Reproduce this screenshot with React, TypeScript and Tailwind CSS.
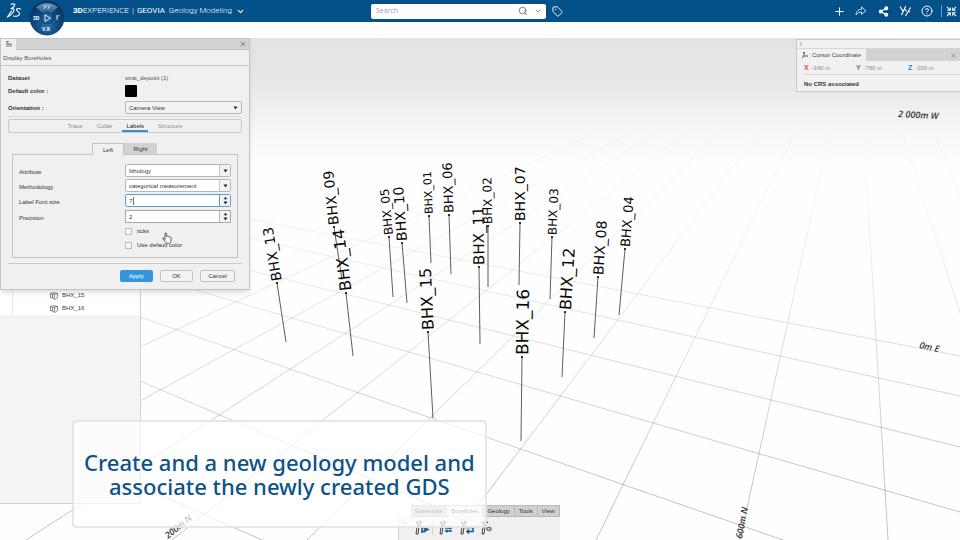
import React, { useState } from 'react';
import { ChevronDown, ChevronRight, CircleHelp, Plus, Search, Share2, Tag, X } from 'lucide-react';

interface Borehole {
  name: string;
  collar: [number, number];
  toe: [number, number];
  top: [number, number];
  size: number;
}

type Line = [number, number, number, number];

const boreholes: Borehole[] = [
  { name: 'BHX_01', collar: [429, 216], toe: [431, 263], top: [427, 172], size: 11 },
  { name: 'BHX_02', collar: [488, 226], toe: [488, 287], top: [487, 179], size: 12 },
  { name: 'BHX_03', collar: [552, 237], toe: [550, 299], top: [554, 188], size: 12 },
  { name: 'BHX_04', collar: [625, 249], toe: [619, 315], top: [629, 197], size: 13 },
  { name: 'BHX_05', collar: [389, 237], toe: [393, 297], top: [384, 187], size: 12 },
  { name: 'BHX_06', collar: [449, 215], toe: [451, 274], top: [447, 161], size: 13 },
  { name: 'BHX_07', collar: [520, 223], toe: [519, 285], top: [520, 165], size: 14 },
  { name: 'BHX_08', collar: [598, 277], toe: [594, 338], top: [602, 219], size: 14 },
  { name: 'BHX_09', collar: [334, 227], toe: [342, 280], top: [328, 170], size: 14 },
  { name: 'BHX_10', collar: [402, 243], toe: [407, 303], top: [398, 184], size: 14 },
  { name: 'BHX_11', collar: [479, 267], toe: [480, 344], top: [478, 206], size: 15 },
  { name: 'BHX_12', collar: [565, 312], toe: [562, 377], top: [569, 248], size: 16 },
  { name: 'BHX_13', collar: [277, 283], toe: [286, 342], top: [267, 224], size: 14 },
  { name: 'BHX_14', collar: [346, 293], toe: [353, 356], top: [338, 228], size: 16 },
  { name: 'BHX_15', collar: [428, 332], toe: [433, 418], top: [425, 265], size: 16 },
  { name: 'BHX_16', collar: [522, 357], toe: [521, 441], top: [523, 285], size: 17 },
];

const eastings: Line[] = [
  [140, 198, 960, 356],
  [140, 214, 960, 396],
  [140, 243, 960, 447],
  [140, 274, 960, 512],
  [140, 317, 783, 540],
  [140, 381, 515, 540],
  [140, 486, 262, 540],
];

const northings: Line[] = [
  [935, 135, 960, 196],
  [903, 135, 960, 313],
  [864, 135, 888, 540],
  [829, 135, 740, 540],
  [794, 135, 596, 540],
  [757, 135, 452, 540],
  [716, 135, 307, 540],
  [682, 135, 172, 540],
  [652, 135, 26, 540],
  [626, 135, 140, 401],
  [590, 135, 140, 347],
];

const gridLabels = [
  { text: '2 000m W', x: 898, y: 117, angle: 3 },
  { text: '0m E', x: 919, y: 348, angle: 12 },
  { text: '600m N', x: 742, y: 539, angle: -79 },
  { text: '200m N', x: 168, y: 539, angle: -39 },
];

const Scene: React.FC = () => (
  <svg className="block w-full h-full" viewBox="0 38 960 502" preserveAspectRatio="xMinYMin slice" aria-hidden="true">
    <defs>
      <linearGradient id="sky" x1="0" y1="38" x2="0" y2="165" gradientUnits="userSpaceOnUse">
        <stop offset="0" stopColor="#e3e3e3" />
        <stop offset="0.4" stopColor="#e9e9e9" />
        <stop offset="0.7" stopColor="#f6f6f6" />
        <stop offset="1" stopColor="#fefefe" />
      </linearGradient>
      <linearGradient id="fade" x1="0" y1="130" x2="0" y2="500" gradientUnits="userSpaceOnUse">
        <stop offset="0" stopColor="#777" stopOpacity="0.04" />
        <stop offset="0.3" stopColor="#777" stopOpacity="0.13" />
        <stop offset="0.6" stopColor="#777" stopOpacity="0.32" />
        <stop offset="1" stopColor="#777" stopOpacity="0.55" />
      </linearGradient>
    </defs>
    <rect x="0" y="38" width="960" height="502" fill="#fefefe" />
    <rect x="0" y="38" width="960" height="127" fill="url(#sky)" />
    <g stroke="url(#fade)" strokeWidth="0.8">
      {[...eastings, ...northings].map(([x1, y1, x2, y2]) => (
        <line key={`${x1}-${y1}-${x2}`} x1={x1} y1={y1} x2={x2} y2={y2} />
      ))}
    </g>
    <g fontFamily="'Open Sans', 'Noto Sans', sans-serif" fontSize="9" fontStyle="italic" fontWeight="600" fill="#333">
      {gridLabels.map((l) => (
        <text key={l.text} transform={`translate(${l.x} ${l.y}) rotate(${l.angle})`}>{l.text}</text>
      ))}
    </g>
    <g fontFamily="'DejaVu Sans', sans-serif" fill="#0a0a0a">
      {boreholes.map(({ name, collar, toe, top, size }) => {
        const angle = (Math.atan2(top[1] - collar[1], top[0] - collar[0]) * 180) / Math.PI;
        return (
          <g key={name}>
            <line x1={collar[0]} y1={collar[1]} x2={toe[0]} y2={toe[1]} stroke="#333" strokeWidth="0.8" />
            <circle cx={collar[0]} cy={collar[1]} r="1.1" />
            <text transform={`translate(${collar[0]} ${collar[1]}) rotate(${angle})`} x="2" y={size * 0.36} fontSize={size}>
              {name}
            </text>
          </g>
        );
      })}
    </g>
  </svg>
);

const Logo: React.FC = () => (
  <svg className="w-4 h-4" viewBox="0 0 16 16" fill="none" stroke="#fff" strokeWidth="1.1" strokeLinecap="round" strokeLinejoin="round" aria-hidden="true">
    <path d="M5 1.200c2.600-.8 4.300-.2 3.700 1C8.200 3.400 6.800 4.700 5 5.700c1.800-.2 2.800.2 3 1 .3 1.800-2.400 5.200-6.600 7.400 1.500-2.300 2.700-4.200 4-6" />
    <path d="M14.500 6c-1.900-.9-4-.5-4 .7 0 1.300 3.300 2.300 3 4.100-.3 1.900-3.200 3-6 2.200" />
  </svg>
);

const Compass: React.FC = () => (
  <svg className="w-9 h-9" viewBox="0 0 36 36" aria-hidden="true">
    <defs>
      <radialGradient id="ball" cx="0.5" cy="0.7" r="0.7">
        <stop offset="0" stopColor="#2672ad" />
        <stop offset="0.5" stopColor="#0e4a80" />
        <stop offset="1" stopColor="#062f58" />
      </radialGradient>
      <linearGradient id="shine" x1="0" y1="0" x2="0" y2="1">
        <stop offset="0" stopColor="#7fa9c7" />
        <stop offset="1" stopColor="#2c6797" />
      </linearGradient>
    </defs>
    <circle cx="18" cy="18" r="17" fill="url(#ball)" stroke="#0a3c69" strokeWidth="0.8" />
    <path d="M7 7.500a15.500 15.500 0 0 1 22 0l-6.500 6a7 7 0 0 0-9 0z" fill="url(#shine)" opacity="0.8" />
    <circle cx="18" cy="18" r="6" fill="#1b5c93" stroke="#0a3c69" strokeWidth="0.8" />
    <path d="M8 28l5.500-5.500M28 28l-5.500-5.500M8 8l5.500 5.500M28 8l-5.500 5.500" stroke="#0a3761" strokeWidth="0.7" />
    <path d="M16 14.800l5.500 3.300-5.500 3.400z" fill="none" stroke="#fff" strokeWidth="0.9" />
    <path d="M14.500 5l2 2.500M17 5l-2 4M18 5.500l1.800 2M21 5l-2.200 4.200" fill="none" stroke="#dceaf4" strokeWidth="0.8" />
    <path d="M28 20v-5M28 17.500c.4-1.400 1.200-2 2.500-2" fill="none" stroke="#dceaf4" strokeWidth="0.9" />
    <g fill="#fff" fontFamily="'Open Sans', sans-serif" fontSize="5" fontWeight="700">
      <text x="4" y="20">3D</text>
      <text x="13" y="31">V.R</text>
    </g>
  </svg>
);

const headerButton = 'flex items-center justify-center w-4 h-4 text-white';

const Header: React.FC = () => (
  <header className="relative z-20 flex items-center h-[22px] bg-[#045088] text-white font-['Open_Sans',sans-serif]">
    <div className="flex items-center shrink-0 basis-[371px]">
      <a href="#home" aria-label="Home" className="ml-1.5"><Logo /></a>
      <button aria-label="Compass" className="ml-[7px] h-[22px] overflow-visible self-start"><Compass /></button>
      <h1 className="ml-2 flex items-center text-[8px] whitespace-nowrap font-['Roboto',sans-serif]">
        <span className="font-bold">3D</span>
        <span className="font-light">EXPERIENCE</span>
        <span className="mx-[3px] text-[#b7cfe0]">|</span>
        <span>GEOVIA</span>
        <span className="ml-1 font-light">Geology Modeling</span>
      </h1>
      <button aria-label="Switch app" className="ml-1"><ChevronDown size={9} strokeWidth={3} /></button>
    </div>
    <form className="flex items-center w-[175px] h-[15px] bg-white rounded-xs pr-1" onSubmit={(e) => e.preventDefault()}>
      <input aria-label="Search" placeholder="Search" className="flex-1 min-w-0 px-[5px] text-[7px] text-gray-700 placeholder:text-gray-400 outline-none" />
      <button aria-label="Run search" className="text-gray-600"><Search size={10} strokeWidth={1.8} /></button>
      <button aria-label="Search options" className="ml-1.5 text-gray-500"><ChevronDown size={8} strokeWidth={2.5} /></button>
    </form>
    <button aria-label="Tags" className="ml-1.5"><Tag size={11} strokeWidth={2} /></button>
    <nav className="flex items-center justify-end flex-1 gap-1.5 pr-[3px]">
      <button aria-label="Add" className={headerButton}><Plus size={13} strokeWidth={2} /></button>
      <button aria-label="Share" className={headerButton}>
        <svg className="w-3 h-3" viewBox="0 0 12 12" fill="none" stroke="#cfe0ec" strokeWidth="1"><path d="M1 10c.3-4 2.500-5.600 5.500-5.600V2L11 5.800 6.500 9.300V7C4.500 7 2.500 7.800 1 10z" /></svg>
      </button>
      <button aria-label="Collaborate" className={headerButton}><Share2 size={11} strokeWidth={2.6} fill="#fff" /></button>
      <button aria-label="Communities" className={headerButton}>
        <svg className="w-3 h-3" viewBox="0 0 12 12" fill="none" stroke="#fff" strokeWidth="1.100"><path d="M1 1.500l2.800 4.500M6.800 1L2.500 10M5.500 3.500l2 3M11.500 2.500L6.500 11M8.800 6.500l2.400.3" /></svg>
      </button>
      <button aria-label="Help" className={headerButton}><CircleHelp size={12} strokeWidth={2} /></button>
      <span className="flex items-center border-l border-[#6d9cc0] h-3 pl-1">
        <button aria-label="Exit full screen">
          <svg className="w-[11px] h-[11px]" viewBox="0 0 12 12" fill="none" stroke="#fff" strokeWidth="1.100"><path d="M1 1l3.500 3.500M1.500 4.700h3.200V1.500M11 1L7.500 4.500M7.300 1.500v3.200h3.200M1 11l3.500-3.500M1.500 7.300h3.200v3.200M11 11L7.500 7.500M10.500 7.300H7.300v3.200" /></svg>
        </button>
      </span>
    </nav>
  </header>
);

const Caret: React.FC<{ up?: boolean }> = ({ up }) => (
  <svg className="w-[5px] h-1" viewBox="0 0 5 4" fill="#222" aria-hidden="true">
    <path d={up ? 'M2.500 0.800L4.300 3.300H0.700z' : 'M0.500 0.500H4.500L2.500 3.600z'} />
  </svg>
);

interface SelectProps {
  id: string;
  value: string;
  split?: boolean;
}

const SelectBox: React.FC<SelectProps> = ({ id, value, split }) => (
  <div className={`relative flex h-[13px] w-full border border-[#b4b6b9] rounded-[2px] ${split ? 'bg-white' : 'bg-[#f3f3f3]'}`}>
    <select id={id} className="appearance-none w-full pl-[3px] pr-3 bg-transparent outline-none">
      <option>{value}</option>
    </select>
    <span className={`absolute right-0 inset-y-0 w-[11px] flex items-center justify-center pointer-events-none ${split ? 'bg-[#f3f3f3] border-l border-[#c4c6c8]' : ''}`}>
      <Caret />
    </span>
  </div>
);

interface SpinProps {
  id: string;
  initial: string;
  active?: boolean;
}

const SpinBox: React.FC<SpinProps> = ({ id, initial, active }) => {
  const [value, setValue] = useState(initial);
  const step = (n: number) => setValue(String(Number(value) + n));
  return (
    <div className={`relative flex h-[13px] w-full border bg-white ${active ? 'border-[#5b9fcb] rounded-[2px]' : 'border-[#a5a7aa]'}`}>
      <input id={id} value={value} onChange={(e) => setValue(e.target.value)} className="flex-1 min-w-0 pl-[3px] bg-transparent outline-none" />
      {active && <span className="absolute left-[7px] top-0.5 w-px h-2 bg-gray-500" />}
      <span className={`w-[11px] flex flex-col items-center justify-around bg-[#f3f3f3] border-l ${active ? 'border-[#5b9fcb]' : 'border-[#b4b6b9]'}`}>
        <button aria-label="Increase" className="flex" onClick={() => step(1)}><Caret up /></button>
        <button aria-label="Decrease" className="flex" onClick={() => step(-1)}><Caret /></button>
      </span>
    </div>
  );
};

const BoreholeDialog: React.FC = () => {
  const [section, setSection] = useState('Labels');
  return (
    <section className="absolute left-0 top-0 z-10 w-[250px] bg-[#f0f0f0] border border-[#c3c4c6] shadow-md text-[6px] leading-2 text-[#333]">
      <div className="flex items-center justify-between h-[11px] bg-[#d1d2d4] border-b border-[#c3c4c6] pr-0.5">
        <span className="flex items-center justify-center w-[15px] h-[11px] bg-[#f0f0f0]">
          <svg className="w-2 h-2" viewBox="0 0 8 8" fill="none" stroke="#666" strokeWidth="0.800"><path d="M2 7V1.500M1 1.500h3M4 7V4h3M6 7V4M2 4h2" /></svg>
        </span>
        <button aria-label="Close dialog"><X size={8} strokeWidth={1.5} /></button>
      </div>
      <h2 className="flex items-center h-4 pl-0.5 border-b border-[#c8c9cb] text-[#555]">Display Boreholes</h2>

      <div className="px-[7px] pt-2">
        <dl className="grid grid-cols-[117px_1fr] items-center">
          <dt className="font-bold h-[11px]">Dataset</dt>
          <dd className="h-[11px] text-[#555]">strat_deposit (1)</dd>
          <dt className="font-bold">Default color :</dt>
          <dd><button aria-label="Default color" className="block w-3 h-3 bg-black rounded-[1px]" /></dd>
        </dl>
        <div className="grid grid-cols-[117px_1fr] items-center mt-1">
          <label htmlFor="orientation" className="font-bold">Orientation :</label>
          <SelectBox id="orientation" value="Camera View" />
        </div>

        <div className="mt-0.5 pt-0.5 border-t border-[#dcddde]">
          <div className="flex h-[14px] justify-center gap-[14px] border border-[#c9cacc] rounded-[2px]">
            {['Trace', 'Collar', 'Labels', 'Structure'].map((name) => (
              <button
                key={name}
                onClick={() => setSection(name)}
                className={section === name ? 'border-b-2 border-[#368ec4] pt-0.5 text-[#222] px-1 -mx-1' : 'text-[#8b8d90]'}
              >
                {name}
              </button>
            ))}
          </div>
        </div>

        <div className="px-1 pt-[10px]">
          <div className="flex pl-20">
            <button className="relative w-8 h-3 -mb-px border border-b-0 border-[#c3c4c6] bg-[#f0f0f0]">Left</button>
            <button className="w-[33px] h-[11px] bg-[#d1d2d4]">Right</button>
          </div>
          <div className="border border-[#c3c4c6] px-1.5 pt-[9px] pb-2">
            <div className="grid grid-cols-[106px_1fr] gap-y-0.5 [&>label]:pt-1">
              <label htmlFor="attribute">Attribute</label>
              <SelectBox id="attribute" value="lithology" split />
              <label htmlFor="methodology">Methodology</label>
              <SelectBox id="methodology" value="categorical measurement" split />
              <label htmlFor="fontsize">Label Font size</label>
              <SpinBox id="fontsize" initial="7" active />
              <label htmlFor="precision" className="mt-px">Precision</label>
              <div className="mt-px"><SpinBox id="precision" initial="2" /></div>
            </div>
            <div className="flex flex-col gap-[6px] pl-[106px] pt-1">
              {['ticks', 'Use default color'].map((label) => (
                <label key={label} className="flex items-center gap-[5px]">
                  <input type="checkbox" className="appearance-none w-[7px] h-[7px] border border-[#b9bbbd] bg-[#f6f6f6]" />
                  {label}
                </label>
              ))}
            </div>
          </div>
        </div>

        <div className="flex justify-end gap-[7px] mt-[5px] pt-[6px] pb-[7px] pr-[7px] border-t border-[#c8c9cb]">
          <button className="w-[33px] h-3 rounded-[2px] bg-[#3595db] text-white">Apply</button>
          <button className="w-[33px] h-3 rounded-[2px] border border-[#c0c2c4] bg-[#f3f3f3]">OK</button>
          <button className="w-[35px] h-3 rounded-[2px] border border-[#c0c2c4] bg-[#f3f3f3]">Cancel</button>
        </div>
      </div>

      <svg className="absolute left-[161px] top-[193px] w-2.5 h-3" viewBox="0 0 10 12" fill="#fff" stroke="#333" strokeWidth="0.800" strokeLinejoin="round" aria-hidden="true">
        <path d="M3 7.500V1.500c0-1 1.500-1 1.500 0v3c.4-.6 1.400-.5 1.500.2.500-.5 1.400-.3 1.500.4.600-.400 1.500-.1 1.500.8v2.300c0 2-.8 3.100-2.500 3.100-2 0-2.700-.8-3.500-2L.8 6.800c-.300-.8.600-1.300 1.200-.7z" />
      </svg>
    </section>
  );
};

const TreePanel: React.FC = () => (
  <aside className="absolute left-0 top-0 bottom-9 w-[141px] bg-[#f3f4f6] border-r border-b border-[#cfd1d4] text-[6px] text-[#444]">
    <div className="bg-white">
      <ul className="ml-3 border-l border-[#e8e8e8] pl-[37px] pt-[251px]">
        {['BHX_15', 'BHX_16'].map((name) => (
          <li key={name} className="flex items-center gap-1 h-[13px]">
            <svg className="w-2 h-2" viewBox="0 0 8 8" fill="none" stroke="#555" strokeWidth="0.700"><path d="M.5 1.500L3 .7l4.500.8v4L5 7.500 2.500 6V2.500zM.5 1.500v4l2 .5M2.500 2.500l5-1M4.500 2.500v4" /></svg>
            {name}
          </li>
        ))}
      </ul>
    </div>
  </aside>
);

const coordinates = [
  { axis: 'X', value: '-340 m', color: 'text-[#e2513f]' },
  { axis: 'Y', value: '-780 m', color: 'text-[#3f9a45]' },
  { axis: 'Z', value: '-100 m', color: 'text-[#2d86c4]' },
];

const CoordinatePanel: React.FC = () => (
  <section className="absolute right-0 top-px w-[164px] bg-[#f1f1f1] border border-r-0 border-[#c8c9cb] text-[6px] leading-2 text-[#444]">
    <button aria-label="Collapse panel" className="flex items-center h-[9px] w-full border-b border-[#d5d6d8] pl-px"><ChevronRight size={6} strokeWidth={2} /></button>
    <div className="flex items-center justify-between h-3 bg-[#d1d2d4] pr-[3px]">
      <h2 className="flex items-center gap-1 w-[69px] h-3 pl-[5px] bg-[#f1f1f1]">
        <svg className="w-1.5 h-1.5" viewBox="0 0 6 6" fill="none" stroke="#444" strokeWidth="0.900"><path d="M2 0v4h4M2 4L0 6M1 1l1-1 1 1" /></svg>
        Cursor Coordinate
      </h2>
      <button aria-label="Close coordinates"><X size={7} strokeWidth={1.5} /></button>
    </div>
    <div className="pl-[7px]">
      <div className="grid grid-cols-3 h-[14px] items-center border-b border-[#d5d6d8]">
        {coordinates.map((c) => (
          <span key={c.axis} className="text-[#888]">
            <b className={`mr-px text-[7px] ${c.color}`}>{c.axis}</b> {c.value}
          </span>
        ))}
      </div>
      <p className="font-bold text-[#333] pt-[5px] pb-[3px]">No CRS associated</p>
    </div>
  </section>
);

const tools = ['M8 7v7M8 8l6 2.500L8 13M11 7.500v6', 'M7 9h7M7 12h7M12 7.500v3M9 10.500v3', 'M6 8.500h8v4H8M10 10.500l-2 2 2 2', 'M7 10a2 1.500 0 1 0 4 0 2 1.500 0 1 0-4 0'];

const ActionBar: React.FC = () => (
  <section className="absolute left-[398px] bottom-0 text-[6px] text-[#333]">
    <div className="flex pl-[13px]">
      {['Essentials', 'Boreholes', 'Geology', 'Tools', 'View'].map((tab) => (
        <button
          key={tab}
          className={`h-3 px-1 border border-l-0 border-[#b9babc] ${tab === 'Boreholes' ? 'bg-[#f0f0f0] border-b-0' : 'bg-[#cfd0d2]'}`}
        >
          {tab}
        </button>
      ))}
    </div>
    <div className="flex items-start h-[23px] bg-[#f0f0f0] border-l border-[#d5d6d8] pt-0.5">
      <button aria-label="More commands" className="px-0.5"><ChevronDown size={8} strokeWidth={1.5} /></button>
      {tools.map((d, i) => (
        <button key={d} aria-label={`Borehole command ${i + 1}`} className={`pl-[3px] pr-0.5 ${i === 0 ? 'border-r border-[#d0d0d0] mr-0.5' : ''}`}>
          <svg className="w-4 h-4" viewBox="0 0 16 16" fill="none">
            <path d="M2 15l1-7h2l-1 7zM4 2L2 4h2v4M5 2l3 1.500H6V7" stroke="#444" strokeWidth="1" />
            <path d={d} stroke={i === 3 ? '#777' : '#125a8c'} strokeWidth="1.500" />
          </svg>
        </button>
      ))}
    </div>
  </section>
);

const App: React.FC = () => (
  <div className="flex flex-col h-screen overflow-hidden bg-white font-['Liberation_Sans',Arial,sans-serif]">
    <Header />
    <main className="relative flex-1 min-h-0 mt-4">
      <Scene />
      <TreePanel />
      <BoreholeDialog />
      <CoordinatePanel />
      <ActionBar />
      <div className="absolute left-[72px] bottom-3 z-10 px-2.5 pt-7 pb-7 border-2 border-[#dcdde0]/70 rounded-[4px] bg-white/70 text-center">
        <p className="font-['Noto_Sans',sans-serif] font-medium text-[22px] leading-6 text-[#0d5288] whitespace-nowrap">
          Create and a new geology model and<br />associate the newly created GDS
        </p>
      </div>
    </main>
  </div>
);

export default App;
